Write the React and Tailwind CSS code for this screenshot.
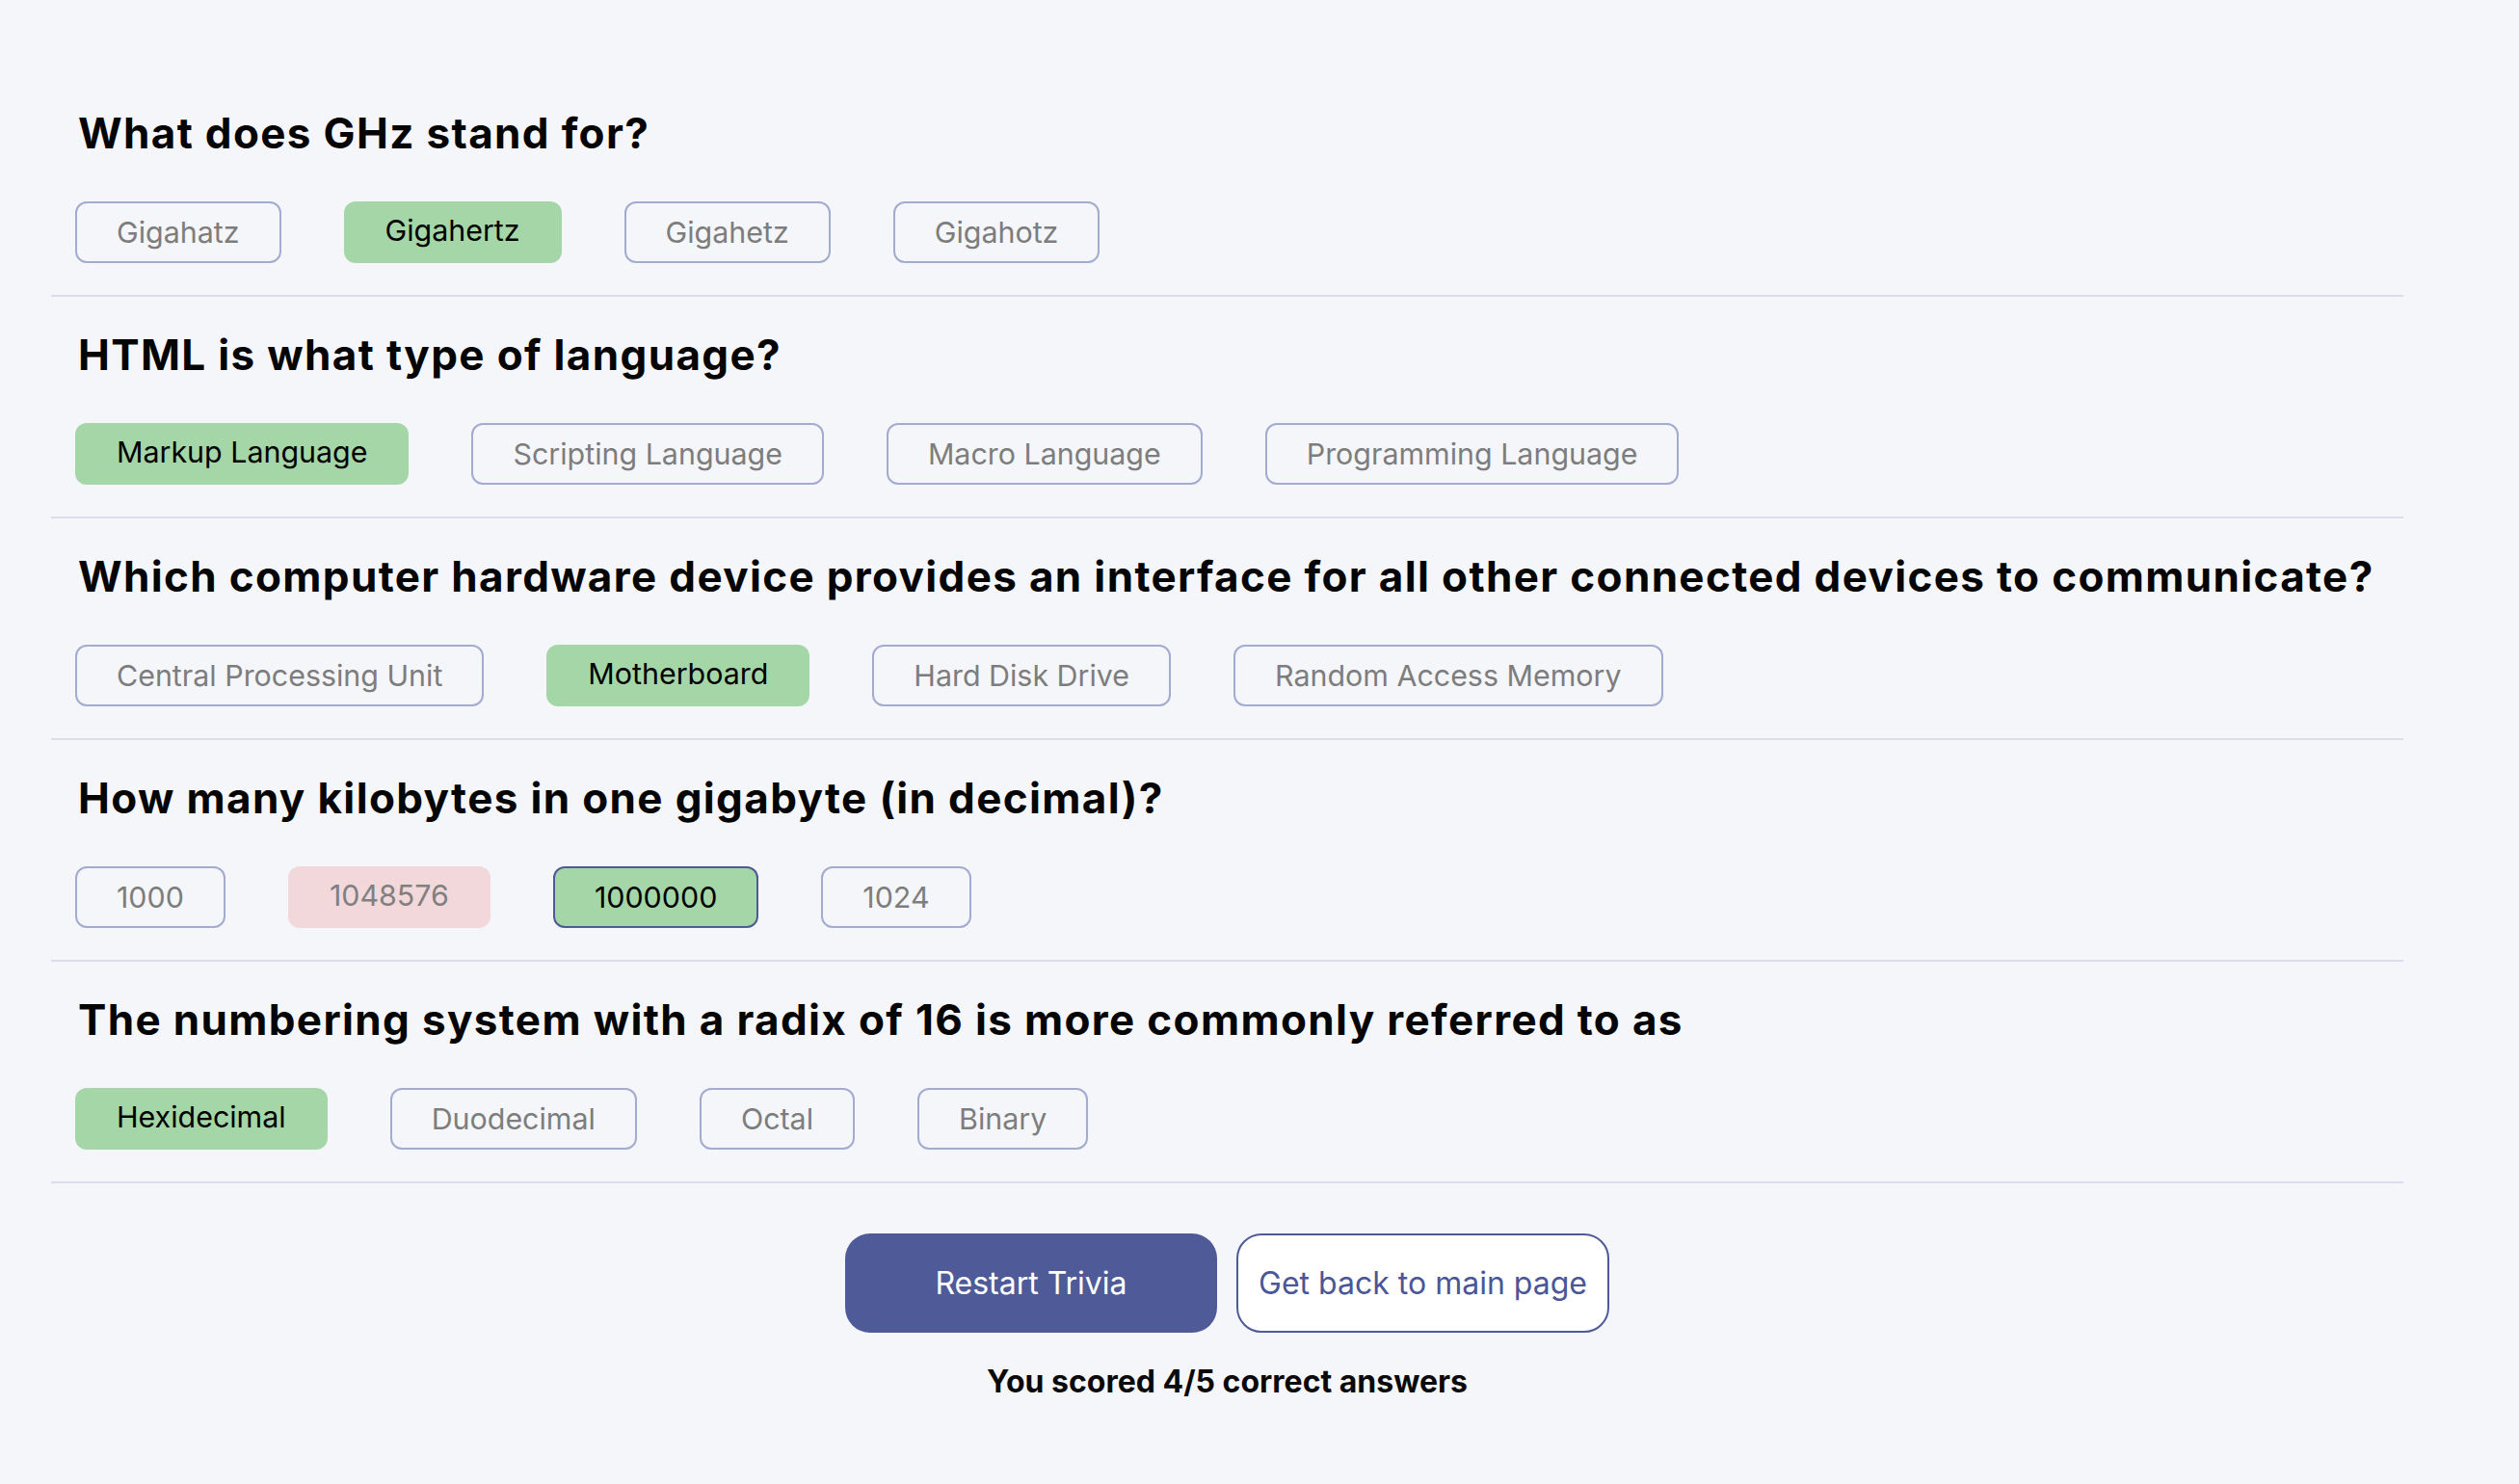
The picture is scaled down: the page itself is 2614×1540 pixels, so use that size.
import React from "react";

const questions = [
  {
    q: "What does GHz stand for?",
    answers: [
      { t: "Gigahatz" },
      { t: "Gigahertz", s: "correct" },
      { t: "Gigahetz" },
      { t: "Gigahotz" },
    ],
  },
  {
    q: "HTML is what type of language?",
    answers: [
      { t: "Markup Language", s: "correct" },
      { t: "Scripting Language" },
      { t: "Macro Language" },
      { t: "Programming Language" },
    ],
  },
  {
    q: "Which computer hardware device provides an interface for all other connected devices to communicate?",
    answers: [
      { t: "Central Processing Unit" },
      { t: "Motherboard", s: "correct" },
      { t: "Hard Disk Drive" },
      { t: "Random Access Memory" },
    ],
  },
  {
    q: "How many kilobytes in one gigabyte (in decimal)?",
    answers: [
      { t: "1000" },
      { t: "1048576", s: "wrong" },
      { t: "1000000", s: "missed" },
      { t: "1024" },
    ],
  },
  {
    q: "The numbering system with a radix of 16 is more commonly referred to as",
    answers: [
      { t: "Hexidecimal", s: "correct" },
      { t: "Duodecimal" },
      { t: "Octal" },
      { t: "Binary" },
    ],
  },
];

function Answer({ t, s }) {
  if (s === "correct") {
    return (
      <div className="h-[64px] px-[43px] pb-[4px] rounded-[12px] bg-[#a5d6a7] text-[#000] flex items-center">
        {t}
      </div>
    );
  }
  if (s === "wrong") {
    return (
      <div className="h-[64px] px-[43px] pb-[4px] rounded-[12px] bg-[#f2d8db] text-[#808080] flex items-center">
        {t}
      </div>
    );
  }
  if (s === "missed") {
    return (
      <div className="h-[64px] px-[41px] rounded-[12px] border-2 border-[#4d5a96] bg-[#a5d6a7] text-[#000] flex items-center">
        {t}
      </div>
    );
  }
  return (
    <div className="h-[64px] px-[41px] rounded-[12px] border-2 border-[#a3abcf] text-[#7d7d7d] flex items-center">
      {t}
    </div>
  );
}

export default function App() {
  return (
    <div className="min-h-[1540px] w-full bg-[#f5f6fa] font-['Inter',sans-serif] pt-[78px]">
      <div className="ml-[53px] w-[2441px]">
        {questions.map((item, i) => (
          <div key={i} className="pt-[36px] pb-[33px] px-[25px] border-b-2 border-[#dcdcef]">
            <h2 className="pl-[3px] text-[44px] leading-[48px] tracking-[1.35px] font-bold text-[#050505] font-['Inter',sans-serif]">
              {item.q}
            </h2>
            <div className="mt-[47px] flex gap-[65px] text-[30.4px] leading-[40px]">
              {item.answers.map((a, j) => (
                <Answer key={j} t={a.t} s={a.s} />
              ))}
            </div>
          </div>
        ))}
        <div className="pt-[52px] flex flex-col items-center">
          <div className="flex gap-[20px]">
            <button className="w-[386px] h-[103px] rounded-[26px] bg-[#4f5b98] text-white text-[32px] leading-[40px]">
              Restart Trivia
            </button>
            <button className="w-[387px] h-[103px] rounded-[26px] bg-white border-2 border-[#4f5b98] text-[#4a5696] text-[32px] leading-[40px]">
              Get back to main page
            </button>
          </div>
          <p className="mt-[31px] text-[32px] leading-[40px] font-bold text-[#0a0a0a]">
            You scored 4/5 correct answers
          </p>
        </div>
      </div>
    </div>
  );
}
